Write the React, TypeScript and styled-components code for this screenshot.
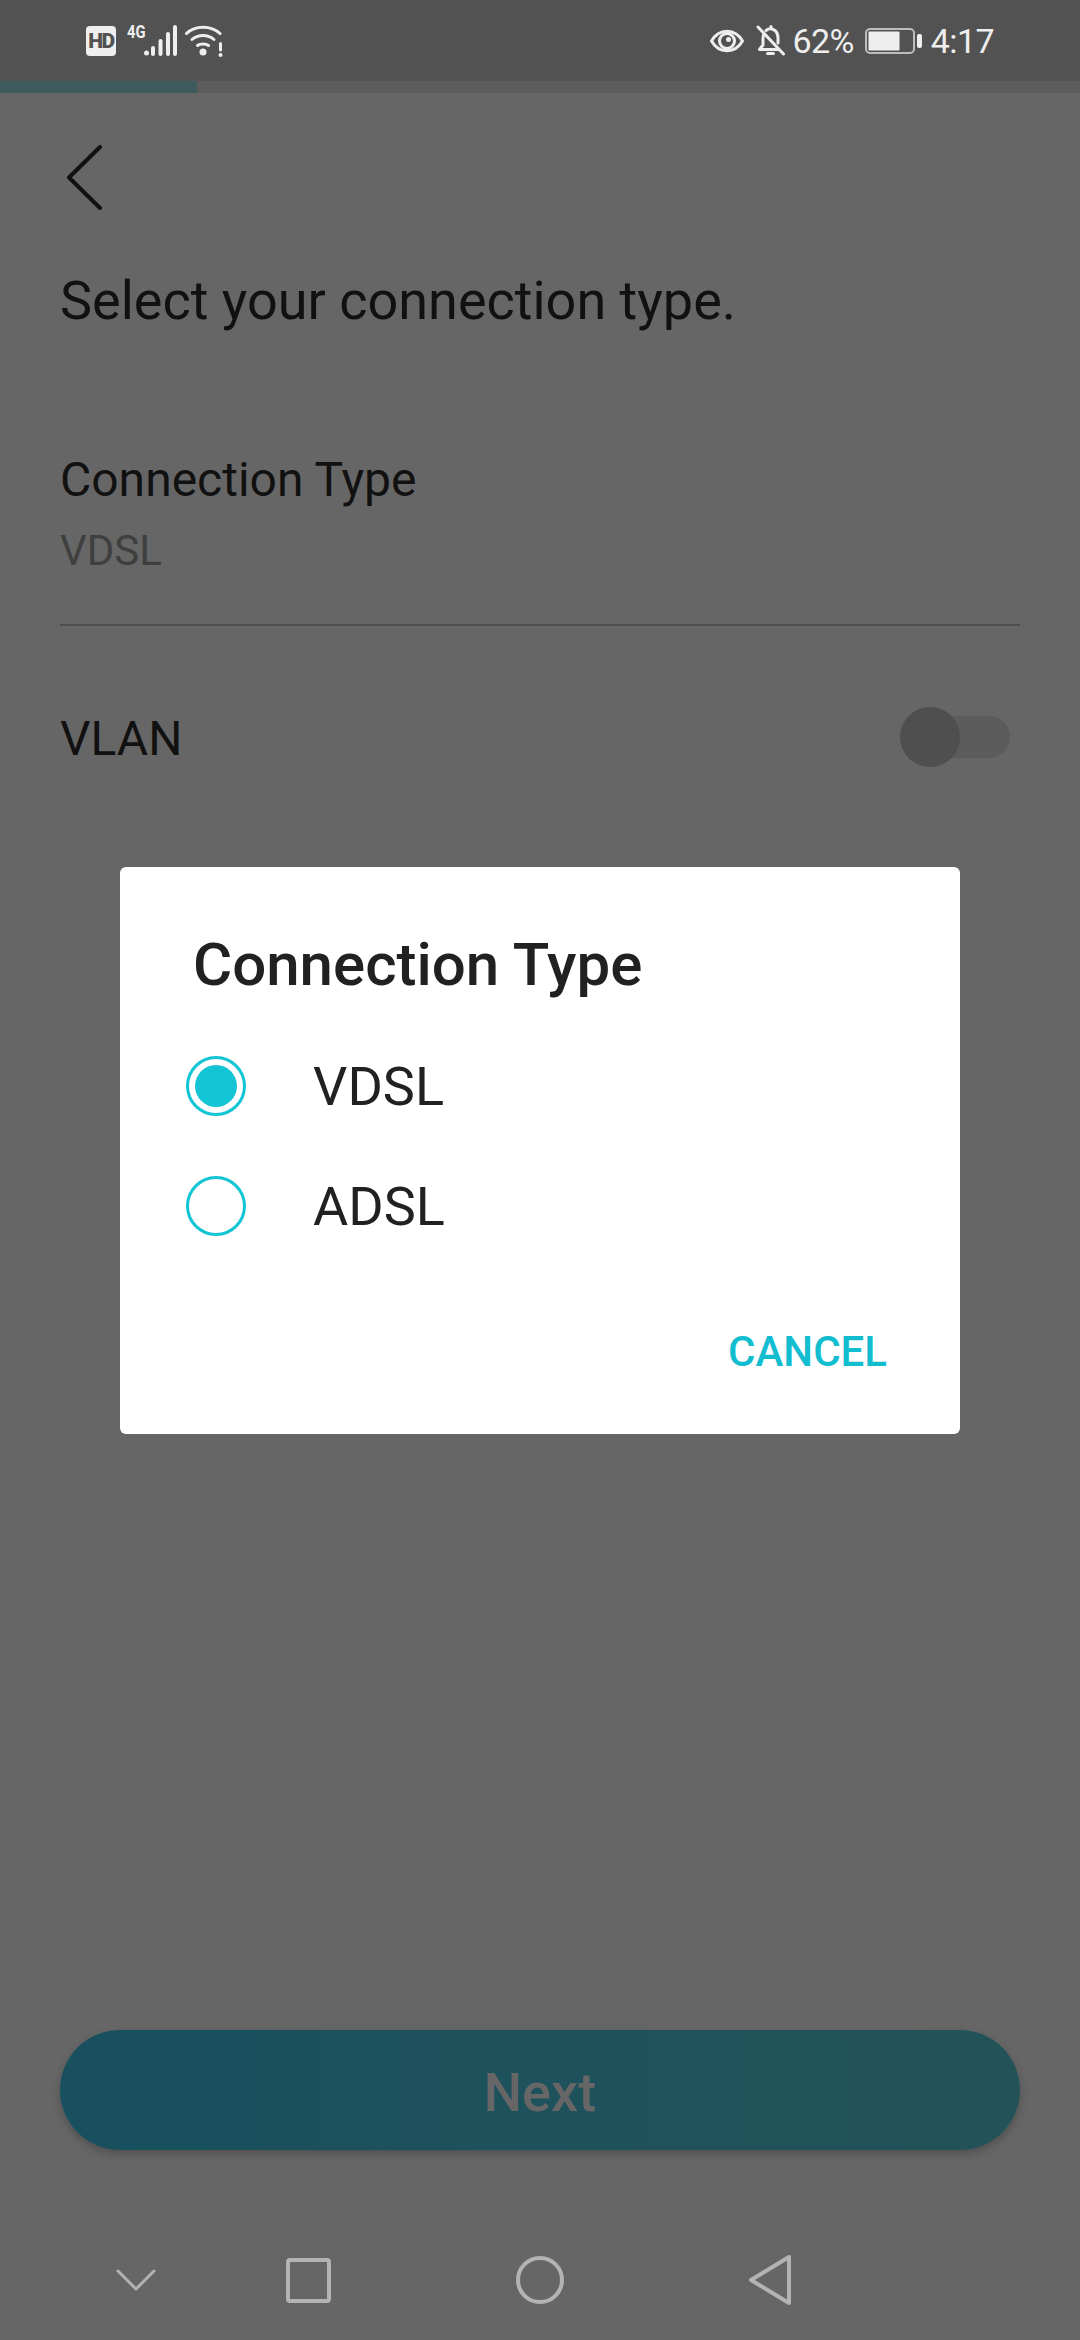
import React from 'react';
import styled, { createGlobalStyle } from 'styled-components';

const GlobalStyle = createGlobalStyle`
  html, body {
    margin: 0;
    padding: 0;
    background: #666666;
    font-family: Roboto, "Liberation Sans", sans-serif;
  }
`;

const Screen = styled.div`
  position: relative;
  display: flex;
  flex-direction: column;
  width: 1080px;
  height: 2340px;
  overflow: hidden;
  background: #666666;
  color: #111111;
`;

// status bar
const StatusBar = styled.div`
  display: flex;
  justify-content: space-between;
  align-items: center;
  height: 81px;
  padding: 0 86px;
  box-sizing: border-box;
  background: #525252;
  color: #eeeeee;
`;

const StatusGroup = styled.div`
  display: flex;
  align-items: center;
  height: 31px;
`;

const HdBadge = styled.span`
  display: flex;
  align-items: center;
  justify-content: center;
  width: 30px;
  height: 30px;
  border-radius: 4px;
  background: #eeeeee;
  color: #525252;
  font-size: 21px;
  font-weight: 900;
  letter-spacing: -1.5px;
`;

const NetworkLabel = styled.span`
  align-self: flex-start;
  width: 17px;
  margin-left: 11px;
  font-size: 18px;
  line-height: 14px;
  font-weight: 700;
  white-space: nowrap;
  transform: scaleX(0.82);
  transform-origin: left top;
`;

const StatusText = styled.span<{ $left: number }>`
  font-size: 34px;
  line-height: 40px;
  letter-spacing: -0.6px;
  margin-left: ${({ $left }) => $left}px;
`;

const StatusIcon = styled.svg<{ $left?: number }>`
  display: block;
  flex: none;
  margin-left: ${({ $left }) => $left ?? 0}px;
`;

const Progress = styled.div`
  height: 12px;
  background: #5c5c5c;
`;

const ProgressFill = styled.div`
  width: 197px;
  height: 100%;
  background: #3d5a5f;
`;

// page behind the dialog
const Content = styled.main`
  display: flex;
  flex: 1;
  flex-direction: column;
  padding: 52px 60px 0;
`;

const BackIcon = styled.svg`
  display: block;
  margin-left: 6px;
`;

const Heading = styled.h1`
  margin: 61px 0 0;
  font-size: 54px;
  line-height: 60px;
  font-weight: 400;
`;

const FieldLabel = styled.div`
  margin-top: 124px;
  font-size: 48px;
  line-height: 50px;
`;

const FieldValue = styled.div`
  margin-top: 24px;
  font-size: 42px;
  line-height: 44px;
  color: #3f3f3f;
`;

const Divider = styled.hr`
  height: 2px;
  margin: 51px 0 0;
  border: 0;
  background: #4f4f4f;
`;

const ToggleRow = styled.div`
  display: flex;
  justify-content: space-between;
  align-items: center;
  margin-top: 79px;
  padding-right: 10px;
`;

const ToggleLabel = styled.span`
  padding-top: 4px;
  font-size: 48px;
  line-height: 60px;
`;

const Toggle = styled.div`
  position: relative;
  width: 110px;
  height: 42px;
  border-radius: 21px;
  background: #5c5c5c;
`;

const ToggleThumb = styled.div`
  position: absolute;
  top: -9px;
  left: 0;
  width: 60px;
  height: 60px;
  border-radius: 50%;
  background: #4f4f4f;
`;

const NextButton = styled.button`
  display: block;
  width: 100%;
  height: 120px;
  margin-top: auto;
  margin-bottom: 70px;
  padding: 4px 0 0;
  border: 0;
  border-radius: 60px;
  background: linear-gradient(90deg, #18505f, #235358);
  box-shadow: 0 4px 8px rgba(0, 0, 0, 0.22);
  color: #666666;
  font-family: inherit;
  font-size: 54px;
  font-weight: 500;
`;

const NavBar = styled.nav`
  display: grid;
  grid-template-columns: repeat(4, auto);
  justify-content: start;
  align-items: center;
  height: 120px;
  padding-left: 114px;
`;

const NavIcon = styled.svg<{ $left: number }>`
  display: block;
  margin-left: ${({ $left }) => $left}px;
`;

// dialog
const Overlay = styled.div`
  position: absolute;
  top: 867px;
  left: 120px;
  right: 120px;
`;

const Dialog = styled.section`
  display: flex;
  flex-direction: column;
  height: 567px;
  padding: 68px 73px 0 66px;
  box-sizing: border-box;
  border-radius: 6px;
  background: #ffffff;
  color: #212121;
`;

const DialogTitle = styled.h2`
  margin: 0 0 0 7px;
  font-size: 60px;
  line-height: 60px;
  font-weight: 500;
`;

const Options = styled.div`
  display: flex;
  flex-direction: column;
  gap: 60px;
  margin-top: 61px;
`;

const Option = styled.label`
  display: flex;
  align-items: center;
  gap: 67px;
  font-size: 54px;
`;

const OptionText = styled.span`
  padding-top: 2px;
  line-height: 58px;
`;

const Radio = styled.span<{ $checked?: boolean }>`
  display: flex;
  align-items: center;
  justify-content: center;
  width: 60px;
  height: 60px;
  box-sizing: border-box;
  border: 3px solid #12c4d4;
  border-radius: 50%;

  &::after {
    content: '';
    display: ${({ $checked }) => ($checked ? 'block' : 'none')};
    width: 42px;
    height: 42px;
    border-radius: 50%;
    background: #12c4d4;
  }
`;

const DialogActions = styled.div`
  display: flex;
  justify-content: flex-end;
  margin-top: 91px;
`;

const CancelButton = styled.button`
  padding: 0;
  border: 0;
  background: none;
  color: #12bdd0;
  font-family: inherit;
  font-size: 42px;
  line-height: 50px;
  font-weight: 500;
`;

const App = () => (
  <Screen>
    <GlobalStyle />
    <StatusBar>
      <StatusGroup>
        <HdBadge>HD</HdBadge>
        <NetworkLabel>4G</NetworkLabel>
        <StatusIcon width="33" height="31" viewBox="0 0 33 31" fill="currentColor">
          <circle cx="2.5" cy="28" r="2.5" />
          <rect x="7" y="21" width="4" height="10" rx="2" />
          <rect x="14.5" y="14" width="4" height="17" rx="2" />
          <rect x="22" y="7" width="4" height="24" rx="2" />
          <rect x="29" y="0" width="4" height="31" rx="2" />
        </StatusIcon>
        <StatusIcon $left={8} width="38" height="32" viewBox="0 0 38 32" fill="none" stroke="currentColor" strokeWidth="3" strokeLinecap="round">
          <path d="M1.5 8.5C10 0 26 0 35 8.5" />
          <path d="M7 14.5C13 9 23 9 29 14.5" />
          <path d="M12.5 20.5C15 18.5 21 18.5 23.5 20.5" />
          <circle cx="18" cy="27" r="3.5" fill="currentColor" stroke="none" />
          <path d="M35.5 18.5V25" />
          <circle cx="35.5" cy="30" r="2" fill="currentColor" stroke="none" />
        </StatusIcon>
      </StatusGroup>
      <StatusGroup>
        <StatusIcon width="34" height="26" viewBox="0 0 34 26" fill="none" stroke="currentColor" strokeWidth="3">
          <path d="M1.5 13C9 0 25 0 32.5 13C25 26 9 26 1.5 13Z" strokeLinejoin="round" />
          <circle cx="17" cy="13" r="7.5" />
          <circle cx="18.5" cy="11.5" r="2.5" fill="currentColor" stroke="none" />
        </StatusIcon>
        <StatusIcon $left={12} width="29" height="31" viewBox="0 0 29 31" fill="none" stroke="currentColor" strokeWidth="3" strokeLinecap="round" strokeLinejoin="round">
          <path d="M8 8.5C7 10 7 12 7 14V20L3.5 24.5H22" />
          <path d="M10 5.5C14 2 22 4 22 13V18" />
          <path d="M15 1.5V3" />
          <path d="M11.5 28.5H17.5" />
          <path d="M2 2L27.5 29" />
        </StatusIcon>
        <StatusText $left={8}>62%</StatusText>
        <StatusIcon $left={11} width="57" height="26" viewBox="0 0 57 26" fill="none">
          <rect x="1" y="1" width="48" height="24" rx="4" stroke="#bdbdbd" strokeWidth="2" />
          <rect x="3.5" y="3.5" width="31" height="19" rx="1" fill="currentColor" />
          <rect x="52" y="6" width="5" height="14" rx="2" fill="currentColor" />
        </StatusIcon>
        <StatusText $left={9}>4:17</StatusText>
      </StatusGroup>
    </StatusBar>
    <Progress>
      <ProgressFill />
    </Progress>
    <Content>
      <BackIcon width="38" height="65" viewBox="0 0 38 65" fill="none" stroke="#111111" strokeWidth="4" strokeLinecap="round" strokeLinejoin="round">
        <path d="M34 2L3 32.5L34 63" />
      </BackIcon>
      <Heading>Select your connection type.</Heading>
      <FieldLabel>Connection Type</FieldLabel>
      <FieldValue>VDSL</FieldValue>
      <Divider />
      <ToggleRow>
        <ToggleLabel>VLAN</ToggleLabel>
        <Toggle>
          <ToggleThumb />
        </Toggle>
      </ToggleRow>
      <NextButton>Next</NextButton>
    </Content>
    <NavBar>
      <NavIcon $left={0} width="44" height="24" viewBox="0 0 44 24" fill="none" stroke="#b3b3b3" strokeWidth="3" strokeLinecap="round" strokeLinejoin="round">
        <path d="M4 3L22 21L40 3" />
      </NavIcon>
      <NavIcon $left={128} width="45" height="45" viewBox="0 0 45 45" fill="none" stroke="#b3b3b3" strokeWidth="4">
        <rect x="2" y="2" width="41" height="41" rx="2" />
      </NavIcon>
      <NavIcon $left={185} width="48" height="48" viewBox="0 0 48 48" fill="none" stroke="#b3b3b3" strokeWidth="4">
        <circle cx="24" cy="24" r="22" />
      </NavIcon>
      <NavIcon $left={184} width="44" height="50" viewBox="0 0 44 50" fill="none" stroke="#b3b3b3" strokeWidth="4" strokeLinejoin="round">
        <path d="M41 2V48L3 25Z" />
      </NavIcon>
    </NavBar>
    <Overlay>
      <Dialog>
        <DialogTitle>Connection Type</DialogTitle>
        <Options>
          <Option>
            <Radio $checked />
            <OptionText>VDSL</OptionText>
          </Option>
          <Option>
            <Radio />
            <OptionText>ADSL</OptionText>
          </Option>
        </Options>
        <DialogActions>
          <CancelButton>CANCEL</CancelButton>
        </DialogActions>
      </Dialog>
    </Overlay>
  </Screen>
);

export default App;
